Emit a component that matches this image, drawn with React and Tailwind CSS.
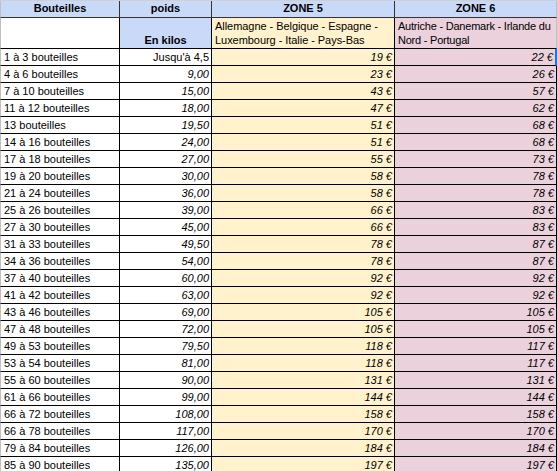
import React from 'react';

const rows = [
  ['1 à 3 bouteilles', "Jusqu'à 4,5", '19', '22'],
  ['4 à 6 bouteilles', '9,00', '23', '26'],
  ['7 à 10 bouteilles', '15,00', '43', '57'],
  ['11 à 12 bouteilles', '18,00', '47', '62'],
  ['13 bouteilles', '19,50', '51', '68'],
  ['14 à 16 bouteilles', '24,00', '51', '68'],
  ['17 à 18 bouteilles', '27,00', '55', '73'],
  ['19 à 20 bouteilles', '30,00', '58', '78'],
  ['21 à 24 bouteilles', '36,00', '58', '78'],
  ['25 à 26 bouteilles', '39,00', '66', '83'],
  ['27 à 30 bouteilles', '45,00', '66', '83'],
  ['31 à 33 bouteilles', '49,50', '78', '87'],
  ['34 à 36 bouteilles', '54,00', '78', '87'],
  ['37 à 40 bouteilles', '60,00', '92', '92'],
  ['41 à 42 bouteilles', '63,00', '92', '92'],
  ['43 à 46 bouteilles', '69,00', '105', '105'],
  ['47 à 48 bouteilles', '72,00', '105', '105'],
  ['49 à 53 bouteilles', '79,50', '118', '117'],
  ['53 à 54 bouteilles', '81,00', '118', '117'],
  ['55 à 60 bouteilles', '90,00', '131', '131'],
  ['61 à 66 bouteilles', '99,00', '144', '144'],
  ['66 à 72 bouteilles', '108,00', '158', '158'],
  ['66 à 78 bouteilles', '117,00', '170', '170'],
  ['79 à 84 bouteilles', '126,00', '184', '184'],
  ['85 à 90 bouteilles', '135,00', '197', '197'],
];

export default function App() {
  return (
    <div className="w-[557px] h-[471px] overflow-hidden bg-white text-[11px] text-[#000] font-['Liberation_Sans',Arial,sans-serif]">
      <div className="grid grid-cols-[120px_92px_183px_162px] border-t border-[#d0d0d0]">
        {/* header row 1 */}
        <div className="h-[17px] leading-[15px] bg-[#c9daf8] border-l border-l-[#c0c0c0] border-r border-b border-[#333] font-bold text-center">Bouteilles</div>
        <div className="h-[17px] leading-[15px] bg-[#c9daf8] border-r border-b border-[#333] font-bold text-center">poids</div>
        <div className="h-[17px] leading-[15px] bg-[#c9daf8] border-r border-b border-[#333] font-bold text-center">ZONE 5</div>
        <div className="h-[17px] leading-[15px] bg-[#c9daf8] border-r border-b border-r-[#c0c0c0] border-b-[#333] font-bold text-center">ZONE 6</div>

        {/* header row 2 */}
        <div className="h-[31px] bg-white border-l border-l-[#c0c0c0] border-r border-b border-[#000]"></div>
        <div className="h-[31px] bg-[#c9daf8] border-r border-b border-[#000] font-bold flex items-end justify-center pb-[1px] leading-[14px]">En kilos</div>
        <div className="h-[31px] bg-[#fff2cc] border-r border-b border-[#000] px-[3px] pt-[1px] leading-[14px] whitespace-nowrap tracking-[-0.05px]">
          Allemagne - Belgique - Espagne -<br />Luxembourg - Italie - Pays-Bas
        </div>
        <div className="h-[31px] bg-[#ead1dc] border-r border-b border-r-[#c0c0c0] border-b-[#000] px-[3px] pt-[1px] leading-[14px] whitespace-nowrap tracking-[-0.22px]">
          Autriche - Danemark - Irlande du<br />Nord - Portugal
        </div>

        {rows.map((r, i) => (
          <React.Fragment key={i}>
            <div className="h-[17px] leading-[16px] border-l border-l-[#c0c0c0] border-r border-b border-[#000] pl-[3px] whitespace-nowrap">{r[0]}</div>
            <div className={`h-[17px] leading-[16px] border-r border-b border-[#000] pr-[2px] text-right whitespace-nowrap ${i === 0 ? '' : 'italic'}`}>{r[1]}</div>
            <div className="h-[17px] leading-[16px] bg-[#fff2cc] border-r border-b border-[#000] pr-[2px] text-right italic">{r[2]} €</div>
            <div className={`h-[17px] leading-[16px] bg-[#ead1dc] border-b border-[#000] pr-[2px] text-right italic ${i === 0 ? 'border-r-2 border-r-[#1a73e8]' : 'border-r'}`}>{r[3]} €</div>
          </React.Fragment>
        ))}
      </div>
    </div>
  );
}
